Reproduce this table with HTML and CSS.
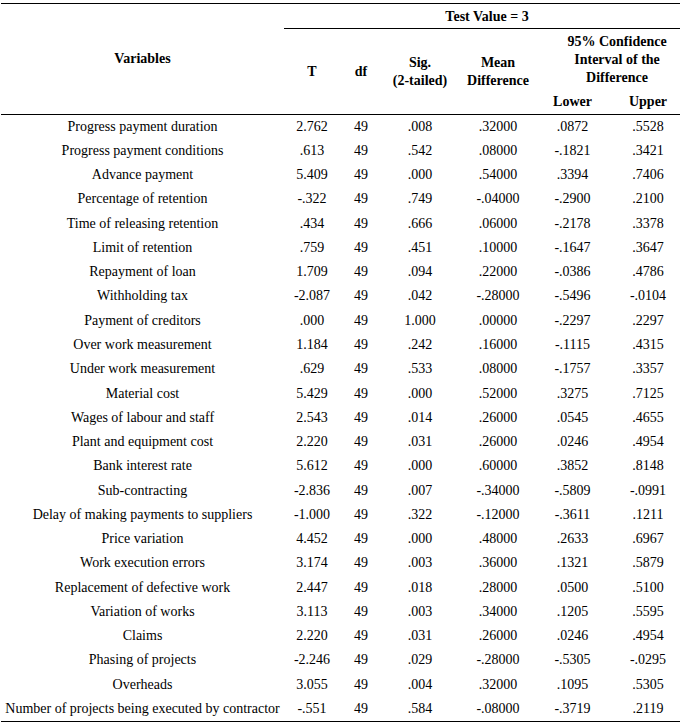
FILE: index.html
```html
<!DOCTYPE html>
<html>
<head>
<meta charset="utf-8">
<link rel="stylesheet" href="styles.css">
</head>
<body>
<table class="stats">
  <colgroup>
    <col class="c-var"><col class="c-t"><col class="c-df"><col class="c-sig"><col class="c-mean"><col class="c-low"><col class="c-up">
  </colgroup>
  <thead>
    <tr class="h1">
      <th rowspan="3" class="var-head">Variables</th>
      <th colspan="6" class="test-value">Test Value = 3</th>
    </tr>
    <tr class="h2">
      <th rowspan="2" class="tall">T</th>
      <th rowspan="2" class="tall">df</th>
      <th rowspan="2" class="tall">Sig.<br>(2-tailed)</th>
      <th rowspan="2" class="tall">Mean<br>Difference</th>
      <th colspan="2" class="ci">95% Confidence<br>Interval of the<br>Difference</th>
    </tr>
    <tr class="h3">
      <th class="bottom">Lower</th>
      <th class="bottom up">Upper</th>
    </tr>
  </thead>
  <tbody>
    <tr><td>Progress payment duration</td><td>2.762</td><td>49</td><td>.008</td><td>.32000</td><td>.0872</td><td class="up">.5528</td></tr>
    <tr><td>Progress payment conditions</td><td>.613</td><td>49</td><td>.542</td><td>.08000</td><td>-.1821</td><td class="up">.3421</td></tr>
    <tr><td>Advance payment</td><td>5.409</td><td>49</td><td>.000</td><td>.54000</td><td>.3394</td><td class="up">.7406</td></tr>
    <tr><td>Percentage of retention</td><td>-.322</td><td>49</td><td>.749</td><td>-.04000</td><td>-.2900</td><td class="up">.2100</td></tr>
    <tr><td>Time of releasing retention</td><td>.434</td><td>49</td><td>.666</td><td>.06000</td><td>-.2178</td><td class="up">.3378</td></tr>
    <tr><td>Limit of retention</td><td>.759</td><td>49</td><td>.451</td><td>.10000</td><td>-.1647</td><td class="up">.3647</td></tr>
    <tr><td>Repayment of loan</td><td>1.709</td><td>49</td><td>.094</td><td>.22000</td><td>-.0386</td><td class="up">.4786</td></tr>
    <tr><td>Withholding tax</td><td>-2.087</td><td>49</td><td>.042</td><td>-.28000</td><td>-.5496</td><td class="up">-.0104</td></tr>
    <tr><td>Payment of creditors</td><td>.000</td><td>49</td><td>1.000</td><td>.00000</td><td>-.2297</td><td class="up">.2297</td></tr>
    <tr><td>Over work measurement</td><td>1.184</td><td>49</td><td>.242</td><td>.16000</td><td>-.1115</td><td class="up">.4315</td></tr>
    <tr><td>Under work measurement</td><td>.629</td><td>49</td><td>.533</td><td>.08000</td><td>-.1757</td><td class="up">.3357</td></tr>
    <tr><td>Material cost</td><td>5.429</td><td>49</td><td>.000</td><td>.52000</td><td>.3275</td><td class="up">.7125</td></tr>
    <tr><td>Wages of labour and staff</td><td>2.543</td><td>49</td><td>.014</td><td>.26000</td><td>.0545</td><td class="up">.4655</td></tr>
    <tr><td>Plant and equipment cost</td><td>2.220</td><td>49</td><td>.031</td><td>.26000</td><td>.0246</td><td class="up">.4954</td></tr>
    <tr><td>Bank interest rate</td><td>5.612</td><td>49</td><td>.000</td><td>.60000</td><td>.3852</td><td class="up">.8148</td></tr>
    <tr><td>Sub-contracting</td><td>-2.836</td><td>49</td><td>.007</td><td>-.34000</td><td>-.5809</td><td class="up">-.0991</td></tr>
    <tr><td>Delay of making payments to suppliers</td><td>-1.000</td><td>49</td><td>.322</td><td>-.12000</td><td>-.3611</td><td class="up">.1211</td></tr>
    <tr><td>Price variation</td><td>4.452</td><td>49</td><td>.000</td><td>.48000</td><td>.2633</td><td class="up">.6967</td></tr>
    <tr><td>Work execution errors</td><td>3.174</td><td>49</td><td>.003</td><td>.36000</td><td>.1321</td><td class="up">.5879</td></tr>
    <tr><td>Replacement of defective work</td><td>2.447</td><td>49</td><td>.018</td><td>.28000</td><td>.0500</td><td class="up">.5100</td></tr>
    <tr><td>Variation of works</td><td>3.113</td><td>49</td><td>.003</td><td>.34000</td><td>.1205</td><td class="up">.5595</td></tr>
    <tr><td>Claims</td><td>2.220</td><td>49</td><td>.031</td><td>.26000</td><td>.0246</td><td class="up">.4954</td></tr>
    <tr><td>Phasing of projects</td><td>-2.246</td><td>49</td><td>.029</td><td>-.28000</td><td>-.5305</td><td class="up">-.0295</td></tr>
    <tr><td>Overheads</td><td>3.055</td><td>49</td><td>.004</td><td>.32000</td><td>.1095</td><td class="up">.5305</td></tr>
    <tr><td>Number of projects being executed by contractor</td><td>-.551</td><td>49</td><td>.584</td><td>-.08000</td><td>-.3719</td><td class="up">.2119</td></tr>
  </tbody>
</table>
</body>
</html>
```

FILE: styles.css
```css
html, body {
  margin: 0;
  padding: 0;
  background: #fff;
}

body {
  padding: 3px 0 0 1px;
}

.stats {
  border-collapse: collapse;
  table-layout: fixed;
  width: 679px;
  font-family: "Liberation Serif", "Times New Roman", serif;
  font-size: 14px;
  color: #000;
  border-top: 1px solid #000;
  border-bottom: 1px solid #000;
}

.c-var { width: 283px; }
.c-t { width: 56px; }
.c-df { width: 42px; }
.c-sig { width: 76px; }
.c-mean { width: 80px; }
.c-low { width: 69px; }
.c-up { width: 73px; }

.stats th,
.stats td {
  padding: 0;
  text-align: center;
  vertical-align: middle;
  white-space: nowrap;
}

.stats th {
  font-weight: bold;
  line-height: 18px;
}

.stats th.var-head,
.stats th.tall,
.stats th.bottom {
  border-bottom: 1px solid #000;
}

.stats tr.h1 { height: 25px; }
.stats tr.h2 { height: 61px; }
.stats tr.h3 { height: 25px; }

.stats th.test-value {
  border-bottom: 1px solid #000;
  padding-left: 10px;
  padding-top: 1px;
}

.stats th.ci {
  padding-left: 16px;
  padding-top: 2px;
}

.stats .up {
  padding-left: 9px;
}

.stats tbody tr {
  height: 24.28px;
}

.stats tbody td {
  line-height: 16px;
}
```
